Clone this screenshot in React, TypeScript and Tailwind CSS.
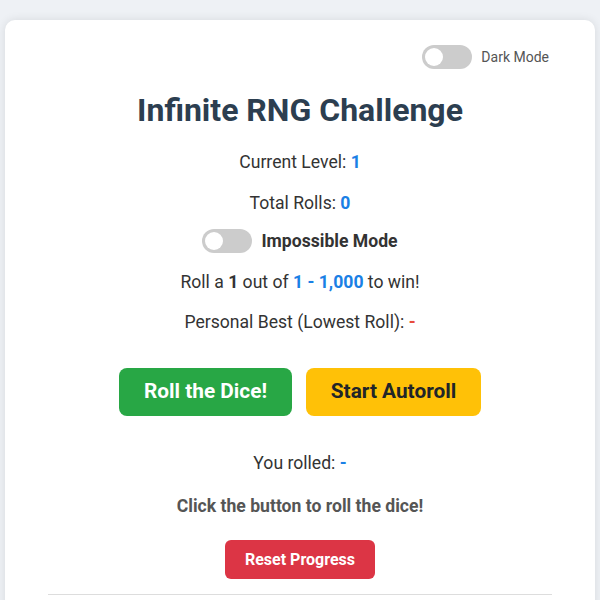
import React, { useState } from 'react';

const Toggle: React.FC<{ on: boolean; onChange: () => void }> = ({ on, onChange }) => (
  <button
    onClick={onChange}
    className={`relative inline-block shrink-0 w-[50px] h-[24px] rounded-full transition-colors ${on ? 'bg-[#2196f3]' : 'bg-[#cccccc]'}`}
  >
    <span
      className={`absolute top-[3px] left-[3px] w-[18px] h-[18px] rounded-full bg-white transition-transform ${on ? 'translate-x-[26px]' : ''}`}
    />
  </button>
);

export default function App() {
  const [darkMode, setDarkMode] = useState(false);
  const [impossible, setImpossible] = useState(false);

  return (
    <div className="min-h-screen bg-[#eef1f5] pt-[20px] px-[5px] font-['Roboto',sans-serif]">
      <div className="bg-white rounded-[10px] shadow-[0_0_10px_rgba(0,0,0,0.1)] px-[43px] pt-[25px] pb-[20px] text-center text-[#333333]">
        {/* dark mode switch */}
        <div className="flex justify-end items-center gap-[9px] pr-[3px]">
          <Toggle on={darkMode} onChange={() => setDarkMode(!darkMode)} />
          <span className="text-[14px] text-[#555555]">Dark Mode</span>
        </div>

        <h1 className="mt-[22px] mb-[20px] text-[32px] leading-[38px] font-bold text-[#2c3e50]">
          Infinite RNG Challenge
        </h1>

        <p className="text-[17.6px] leading-[26px]">
          Current Level: <span className="font-bold text-[#1a80e5]">1</span>
        </p>
        <p className="mt-[15px] text-[17.6px] leading-[26px]">
          Total Rolls: <span className="font-bold text-[#1a80e5]">0</span>
        </p>

        <div className="mt-[12px] h-[26px] flex justify-center items-center gap-[9px]">
          <Toggle on={impossible} onChange={() => setImpossible(!impossible)} />
          <span className="text-[17.6px] leading-[26px] font-bold">Impossible Mode</span>
        </div>

        <p className="mt-[15px] text-[17.6px] leading-[26px]">
          Roll a <span className="font-bold">1</span> out of{' '}
          <span className="font-bold text-[#1a80e5]">1 - 1,000</span> to win!
        </p>
        <p className="mt-[14px] text-[17.6px] leading-[26px]">
          Personal Best (Lowest Roll): <span className="font-bold text-[#e74c3c]">-</span>
        </p>

        <div className="mt-[33px] flex justify-center gap-[14px]">
          <button className="w-[173px] h-[48px] rounded-[8px] bg-[#28a745] text-white text-[20.8px] font-bold">
            Roll the Dice!
          </button>
          <button className="w-[175px] h-[48px] rounded-[8px] bg-[#ffc107] text-[#212529] text-[20.8px] font-bold">
            Start Autoroll
          </button>
        </div>

        <p className="mt-[34px] text-[17.6px] leading-[26px]">
          You rolled: <span className="font-bold text-[#1a80e5]">-</span>
        </p>
        <p className="mt-[17px] text-[17.6px] leading-[26px] font-bold text-[#555555]">
          Click the button to roll the dice!
        </p>

        <button className="mt-[21px] w-[150px] h-[39px] rounded-[6px] bg-[#dc3545] text-white text-[16px] font-bold">
          Reset Progress
        </button>

        <hr className="mt-[15px] border-t border-[#dddddd]" />
      </div>
    </div>
  );
}
